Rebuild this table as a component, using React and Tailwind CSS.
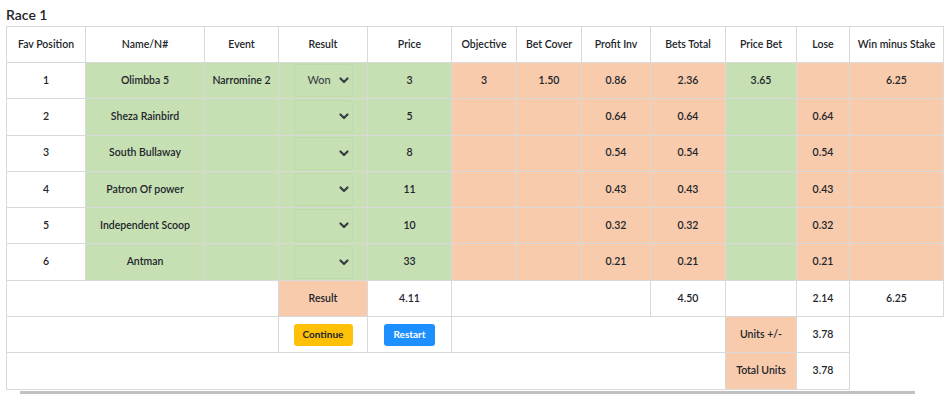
import React from "react";

const GREEN = "bg-[#c6e0b4]";
const PEACH = "bg-[#f8cbad]";
const cell = "border border-[#d9d9d9] text-center align-middle p-0";

function Chevron() {
  return (
    <svg width="10" height="7" viewBox="0 0 10 7" className="shrink-0">
      <path d="M1.5 1.5 L5 5 L8.5 1.5" fill="none" stroke="#3a3f44" strokeWidth="2.2" strokeLinecap="round" strokeLinejoin="round" />
    </svg>
  );
}

function Select({ value }) {
  return (
    <div className="mx-auto flex h-[33px] w-[59px] items-center justify-between rounded-[3px] border border-[#bfd9ab] pl-[13px] pr-[3px] text-[11px] font-medium text-[#3d4247]">
      <span>{value}</span>
      <Chevron />
    </div>
  );
}

const rows = [
  { pos: 1, name: "Olimbba 5", event: "Narromine 2", result: "Won", price: "3", obj: "3", cover: "1.50", profit: "0.86", total: "2.36", pbet: "3.65", lose: "", win: "6.25" },
  { pos: 2, name: "Sheza Rainbird", event: "", result: "", price: "5", obj: "", cover: "", profit: "0.64", total: "0.64", pbet: "", lose: "0.64", win: "" },
  { pos: 3, name: "South Bullaway", event: "", result: "", price: "8", obj: "", cover: "", profit: "0.54", total: "0.54", pbet: "", lose: "0.54", win: "" },
  { pos: 4, name: "Patron Of power", event: "", result: "", price: "11", obj: "", cover: "", profit: "0.43", total: "0.43", pbet: "", lose: "0.43", win: "" },
  { pos: 5, name: "Independent Scoop", event: "", result: "", price: "10", obj: "", cover: "", profit: "0.32", total: "0.32", pbet: "", lose: "0.32", win: "" },
  { pos: 6, name: "Antman", event: "", result: "", price: "33", obj: "", cover: "", profit: "0.21", total: "0.21", pbet: "", lose: "0.21", win: "" },
];

const headers = ["Fav Position", "Name/N#", "Event", "Result", "Price", "Objective", "Bet Cover", "Profit Inv", "Bets Total", "Price Bet", "Lose", "Win minus Stake"];
const widths = [79, 119, 74, 89, 84, 65, 65, 69, 75, 71, 53, 94];

export default function App() {
  return (
    <div className="w-[950px] h-[394px] overflow-hidden bg-white pl-[6px] text-[#212529]" style={{ fontFamily: "Lato, 'Noto Sans', sans-serif" }}>
      <div className="pt-[5px] h-[26px] text-[14px] leading-[20px] font-semibold">Race 1</div>
      <table className="table-fixed border-collapse text-[10.5px] font-semibold w-[937px]">
        <colgroup>
          {widths.map((w, i) => (
            <col key={i} style={{ width: w }} />
          ))}
        </colgroup>
        <thead>
          <tr className="h-[36px]">
            {headers.map((h) => (
              <th key={h} className={`${cell} font-semibold bg-white`}>{h}</th>
            ))}
          </tr>
        </thead>
        <tbody>
          {rows.map((r) => (
            <tr key={r.pos} className="h-[36.3px]">
              <td className={`${cell} bg-white`}>{r.pos}</td>
              <td className={`${cell} ${GREEN}`}>{r.name}</td>
              <td className={`${cell} ${GREEN}`}>{r.event}</td>
              <td className={`${cell} ${GREEN}`}><Select value={r.result} /></td>
              <td className={`${cell} ${GREEN}`}>{r.price}</td>
              <td className={`${cell} ${PEACH}`}>{r.obj}</td>
              <td className={`${cell} ${PEACH}`}>{r.cover}</td>
              <td className={`${cell} ${PEACH}`}>{r.profit}</td>
              <td className={`${cell} ${PEACH}`}>{r.total}</td>
              <td className={`${cell} ${GREEN}`}>{r.pbet}</td>
              <td className={`${cell} ${PEACH}`}>{r.lose}</td>
              <td className={`${cell} ${PEACH}`}>{r.win}</td>
            </tr>
          ))}
          <tr className="h-[36.3px]">
            <td colSpan={3} className={`${cell} bg-white`}></td>
            <td className={`${cell} ${PEACH}`}>Result</td>
            <td className={`${cell} bg-white`}>4.11</td>
            <td colSpan={3} className={`${cell} bg-white`}></td>
            <td className={`${cell} bg-white`}>4.50</td>
            <td className={`${cell} bg-white`}></td>
            <td className={`${cell} bg-white`}>2.14</td>
            <td className={`${cell} bg-white`}>6.25</td>
          </tr>
          <tr className="h-[36.3px]">
            <td colSpan={3} className={`${cell} bg-white`}></td>
            <td className={`${cell} bg-white`}>
              <button className="mx-auto block h-[22px] w-[59px] rounded-[3px] bg-[#ffc107] text-[10px] font-bold text-[#212529]">Continue</button>
            </td>
            <td className={`${cell} bg-white`}>
              <button className="mx-auto block h-[22px] w-[51px] rounded-[3px] bg-[#1e8fff] text-[10px] font-bold text-white">Restart</button>
            </td>
            <td colSpan={4} className={`${cell} bg-white`}></td>
            <td className={`${cell} ${PEACH}`}>Units +/-</td>
            <td className={`${cell} bg-white`}>3.78</td>
          </tr>
          <tr className="h-[36.3px]">
            <td colSpan={9} className={`${cell} bg-white`}></td>
            <td className={`${cell} ${PEACH}`}>Total Units</td>
            <td className={`${cell} bg-white`}>3.78</td>
          </tr>
        </tbody>
      </table>
      <div className="mt-[1px] ml-[14px] h-[6px] w-[895px] bg-[#c1c1c1]"></div>
    </div>
  );
}
